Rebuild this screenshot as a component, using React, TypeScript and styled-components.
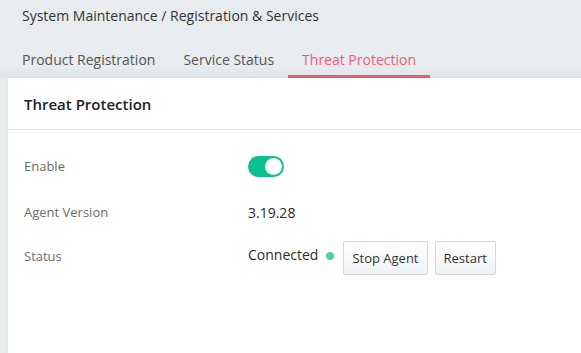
import React from "react";
import styled, { createGlobalStyle } from "styled-components";

const Global = createGlobalStyle`
  html, body { margin: 0; padding: 0; }
  body {
    background: #e8ecef;
    font-family: "Open Sans", "Noto Sans", sans-serif;
    color: #333;
  }
`;

const Page = styled.div`
  width: 581px;
  height: 353px;
  display: flex;
  flex-direction: column;
  overflow: hidden;
  background: #e8ecef;
`;

const Breadcrumb = styled.div`
  padding: 6px 0 0 22px;
  height: 24px;
  font-size: 14px;
  line-height: 20px;
  color: #333;
`;

const Tabs = styled.div`
  display: flex;
  padding-left: 8px;
  height: 48px;
  box-sizing: border-box;
  background: linear-gradient(to bottom, #e8ecef 0%, #e8ecef 75%, #dde3e9 100%);
`;

const Tab = styled.div<{ $active?: boolean }>`
  padding: 20px 14px 5px;
  font-size: 14px;
  line-height: 20px;
  height: 20px;
  color: ${(p) => (p.$active ? "#ef5a76" : "#555")};
  border-bottom: 3px solid ${(p) => (p.$active ? "#ef5a76" : "transparent")};
`;

const Card = styled.div`
  flex: 1;
  margin-left: 8px;
  background: #fff;
  box-shadow: 0 0 3px rgba(0, 0, 0, 0.06);
  display: flex;
  flex-direction: column;
`;

const CardHeader = styled.div`
  height: 52px;
  box-sizing: border-box;
  padding: 16px 16px 0 16px;
  font-size: 15px;
  font-weight: 600;
  line-height: 20px;
  color: #222;
  border-bottom: 1px solid #e6e6e6;
`;

const Body = styled.div`
  padding: 24px 16px 0 16px;
  display: flex;
  flex-direction: column;
`;

const Row = styled.div<{ $h: number }>`
  display: grid;
  grid-template-columns: 224px 1fr;
  align-items: center;
  height: ${(p) => p.$h}px;
`;

const Label = styled.div`
  font-size: 13px;
  color: #6b6b6b;
`;

const Value = styled.div`
  font-size: 14px;
  color: #2c2c2c;
  display: flex;
  align-items: center;
  height: 20px;
`;

const StatusText = styled.span`
  margin-bottom: 4px;
`;

const Toggle = styled.div`
  width: 36px;
  height: 21px;
  border-radius: 11px;
  background: #0cbf8f;
  position: relative;
  &::after {
    content: "";
    position: absolute;
    right: 2px;
    top: 2px;
    width: 17px;
    height: 17px;
    border-radius: 50%;
    background: #fff;
  }
`;

const Dot = styled.span`
  display: inline-block;
  width: 8px;
  height: 8px;
  border-radius: 50%;
  background: #4ecfa9;
  margin: 0 9px 0 8px;
`;

const Button = styled.button`
  flex: none;
  font-family: "Open Sans", "Noto Sans", sans-serif;
  font-size: 13px;
  color: #333;
  height: 34px;
  padding: 0 8px;
  background: linear-gradient(to bottom, #ffffff, #f1f2f4);
  border: 1px solid #d5d7da;
  border-radius: 2px;
  margin-right: 7px;
  margin-top: 4px;
`;

export default function App() {
  return (
    <Page>
      <Global />
      <Breadcrumb>System Maintenance / Registration &amp; Services</Breadcrumb>
      <Tabs>
        <Tab>Product Registration</Tab>
        <Tab>Service Status</Tab>
        <Tab $active>Threat Protection</Tab>
      </Tabs>
      <Card>
        <CardHeader>Threat Protection</CardHeader>
        <Body>
          <Row $h={24}>
            <Label>Enable</Label>
            <Value>
              <Toggle />
            </Value>
          </Row>
          <Row $h={68}>
            <Label>Agent Version</Label>
            <Value>3.19.28</Value>
          </Row>
          <Row $h={20}>
            <Label>Status</Label>
            <Value>
              <StatusText>Connected</StatusText>
              <Dot />
              <Button>Stop Agent</Button>
              <Button>Restart</Button>
            </Value>
          </Row>
        </Body>
      </Card>
    </Page>
  );
}
